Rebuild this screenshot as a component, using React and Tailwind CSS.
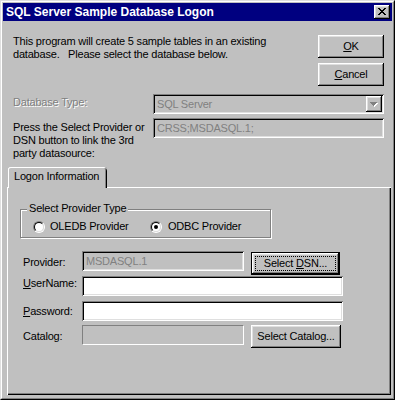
import React from "react";

const RAISED =
  "shadow-[inset_-1px_-1px_0_#000000,inset_1px_1px_0_#ffffff,inset_-2px_-2px_0_#808080,inset_2px_2px_0_#dfdfdf]";
const SUNKEN =
  "shadow-[inset_1px_1px_0_#808080,inset_-1px_-1px_0_#ffffff,inset_2px_2px_0_#000000,inset_-2px_-2px_0_#dfdfdf]";

function CloseGlyph() {
  const px = [
    [0, 0], [1, 0], [6, 0], [7, 0],
    [1, 1], [2, 1], [5, 1], [6, 1],
    [2, 2], [3, 2], [4, 2], [5, 2],
    [3, 3], [4, 3],
    [2, 4], [3, 4], [4, 4], [5, 4],
    [1, 5], [2, 5], [5, 5], [6, 5],
    [0, 6], [1, 6], [6, 6], [7, 6],
  ];
  return (
    <svg width="8" height="7" viewBox="0 0 8 7" shapeRendering="crispEdges">
      {px.map(([x, y], i) => (
        <rect key={i} x={x} y={y} width="1" height="1" fill="#000" />
      ))}
    </svg>
  );
}

function DownArrow() {
  return (
    <svg width="8" height="5" viewBox="0 0 8 5" shapeRendering="crispEdges">
      <g fill="#ffffff">
        <rect x="1" y="1" width="7" height="1" />
        <rect x="2" y="2" width="5" height="1" />
        <rect x="3" y="3" width="3" height="1" />
        <rect x="4" y="4" width="1" height="1" />
      </g>
      <g fill="#808080">
        <rect x="0" y="0" width="7" height="1" />
        <rect x="1" y="1" width="5" height="1" />
        <rect x="2" y="2" width="3" height="1" />
        <rect x="3" y="3" width="1" height="1" />
      </g>
    </svg>
  );
}

function Button({ children, w = "w-[66px]", className = "" }) {
  return (
    <div
      className={`${w} h-[23px] bg-[#c0c0c0] ${RAISED} flex items-center justify-center text-black leading-[13px] ${className}`}
    >
      {children}
    </div>
  );
}

function Radio({ checked }) {
  return (
    <div className="w-[12px] h-[12px] rounded-full border border-t-[#808080] border-l-[#808080] border-r-white border-b-white">
      <div className="w-[10px] h-[10px] rounded-full border border-t-black border-l-black border-r-[#dfdfdf] border-b-[#dfdfdf] bg-white flex items-center justify-center">
        {checked && <div className="w-[4px] h-[4px] rounded-full bg-black" />}
      </div>
    </div>
  );
}

function Field({ w, value, white, flat }) {
  return (
    <div
      className={`${w} h-[20px] ${white ? "bg-white" : "bg-[#c0c0c0]"} ${
        flat ? "border border-t-[#808080] border-l-[#808080] border-r-white border-b-white" : SUNKEN
      } flex items-center pl-[4px] text-[#808080] leading-[13px]`}
    >
      {value}
    </div>
  );
}

export default function App() {
  return (
    <div className="w-[395px] h-[400px] bg-[#c0c0c0] border border-t-[#dfdfdf] border-l-[#dfdfdf] border-r-black border-b-black font-['Liberation_Sans',Arial,sans-serif] text-[11px] tracking-[-0.2px] text-black">
      <div className="h-full border border-t-white border-l-white border-r-[#808080] border-b-[#808080] p-[1px] flex flex-col">
        {/* Title bar */}
        <div className="h-[18px] bg-[#000080] flex items-center justify-between pl-[3px] pr-[2px]">
          <span className="text-white font-bold text-[12px] tracking-normal leading-none">
            SQL Server Sample Database Logon
          </span>
          <div className={`w-[16px] h-[14px] bg-[#c0c0c0] ${RAISED} flex items-center justify-center pl-[0px] pb-[1px]`}>
            <CloseGlyph />
          </div>
        </div>

        {/* Intro + buttons */}
        <div className="mt-[14px] flex">
          <div className="pl-[10px] leading-[13px]">
            <div>This program will create 5 sample tables in an existing</div>
            <div>database.&nbsp;&nbsp;&nbsp;Please select the database below.</div>
          </div>
          <div className="ml-auto mr-[8px] flex flex-col gap-[5px]">
            <Button>
              <span><span className="underline">O</span>K</span>
            </Button>
            <Button>
              <span><span className="underline">C</span>ancel</span>
            </Button>
          </div>
        </div>

        {/* Database type */}
        <div className="mt-[8px] flex">
          <div className="w-[150px] pl-[10px] pt-[2px] leading-[13px] text-[#808080] [text-shadow:1px_1px_0_#ffffff]">
            Database Type:
          </div>
          <div className={`w-[231px] h-[20px] bg-[#c0c0c0] ${SUNKEN} flex items-center pl-[4px] pr-[2px] text-[#808080] leading-[13px]`}>
            <span className="flex-1">SQL Server</span>
            <div className={`w-[16px] h-[16px] bg-[#c0c0c0] ${RAISED} flex items-center justify-center`}>
              <DownArrow />
            </div>
          </div>
        </div>

        {/* Press the select provider */}
        <div className="mt-[4px] flex">
          <div className="w-[150px] pl-[10px] pt-[3px] leading-[13px]">
            <div>Press the Select Provider or</div>
            <div>DSN button to link the 3rd</div>
            <div>party datasource:</div>
          </div>
          <Field w="w-[231px]" value="CRSS;MSDASQL.1;" />
        </div>

        {/* Tab */}
        <div className="mt-[7px] mb-[2px] ml-[4px] w-[384px] flex-1 flex flex-col">
          <div className="ml-[1px] w-[99px] h-[21px] relative z-10 bg-[#c0c0c0] rounded-t-[3px] shadow-[inset_1px_0_0_#ffffff,inset_0_1px_0_#ffffff,inset_-1px_0_0_#000000,inset_-2px_0_0_#808080] pl-[6px] pt-[3px] leading-[13px]">
            Logon Information
          </div>
          <div className="-mt-[1px] flex-1 bg-[#c0c0c0] shadow-[inset_1px_1px_0_#ffffff,inset_-1px_-1px_0_#000000,inset_-2px_-2px_0_#808080] flex flex-col">
            {/* Group box */}
            <div className="mt-[22px] ml-[13px] w-[251px] h-[29px] relative border border-[#808080] shadow-[inset_1px_1px_0_#ffffff,1px_1px_0_#ffffff]">
              <div className="absolute left-[6px] top-[-8px] px-[2px] bg-[#c0c0c0] leading-[13px]">
                Select Provider Type
              </div>
              <div className="mt-[10px] pl-[12px] flex items-center leading-[13px]">
                <div className="w-[117px] flex items-center">
                  <Radio />
                  <span className="ml-[5px]">OLEDB Provider</span>
                </div>
                <div className="flex items-center">
                  <Radio checked />
                  <span className="ml-[6px]">ODBC Provider</span>
                </div>
              </div>
            </div>

            {/* Form */}
            <div className="pl-[16px] leading-[13px]">
              <div className="mt-[13px] flex items-start">
                <div className="w-[59px] pt-[5px]">
                  Pro<span>v</span>ider:
                </div>
                <Field w="w-[162px]" value="MSDASQL.1" />
                <div className="ml-[7px] mt-[1px] w-[89px] h-[23px] border border-black">
                  <div className={`w-full h-full bg-[#c0c0c0] ${RAISED} p-[3px]`}>
                    <div className="w-full h-full border border-dotted border-black flex items-center justify-center">
                      <span>
                        Select <span className="underline">D</span>SN...
                      </span>
                    </div>
                  </div>
                </div>
              </div>

              <div className="mt-[1px] flex items-start">
                <div className="w-[59px] pt-[1px]">
                  <span className="underline">U</span>serName:
                </div>
                <Field w="w-[261px]" value="" white />
              </div>

              <div className="mt-[5px] flex items-start">
                <div className="w-[59px] pt-[4px]">
                  <span className="underline">P</span>assword:
                </div>
                <Field w="w-[261px]" value="" white />
              </div>

              <div className="mt-[4px] flex items-start">
                <div className="w-[59px] pt-[5px]">Catalog:</div>
                <Field w="w-[162px]" value="" flat />
                <Button w="w-[90px]" className="ml-[7px]">
                  Select Catalog...
                </Button>
              </div>
            </div>
          </div>
        </div>
      </div>
    </div>
  );
}
